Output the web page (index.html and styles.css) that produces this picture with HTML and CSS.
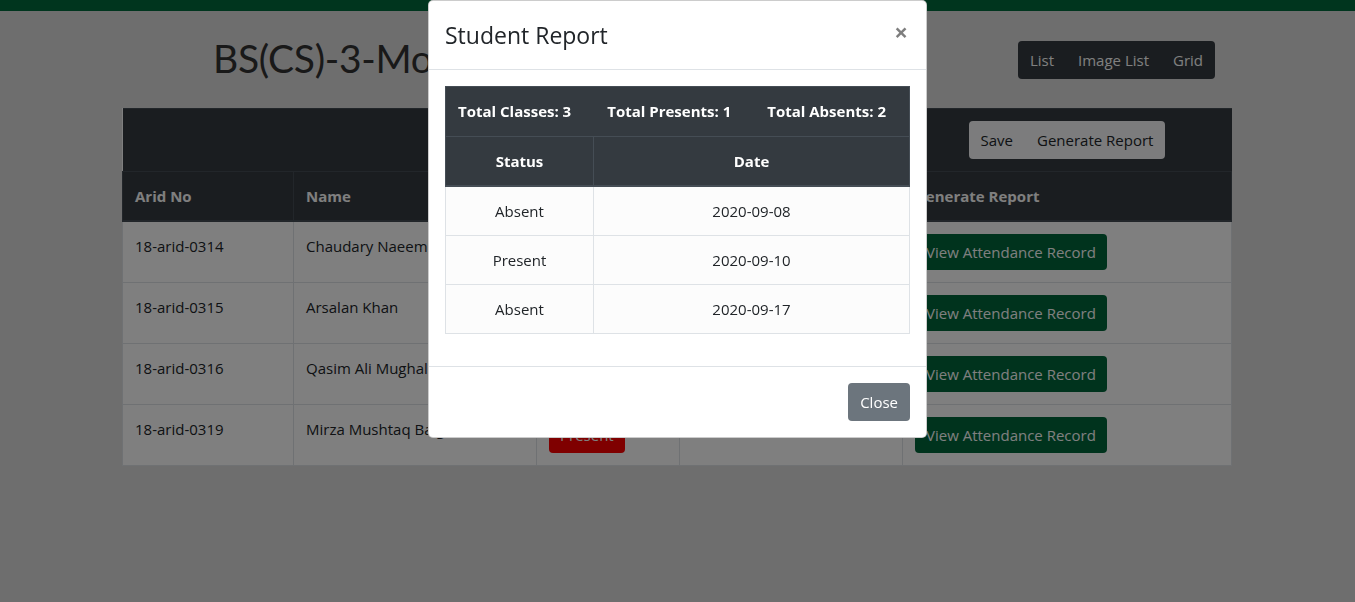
FILE: index.html
```html
<!DOCTYPE html>
<html lang="en">
<head>
<meta charset="utf-8">
<title>Attendance</title>
<link rel="stylesheet" href="styles.css">
</head>
<body>
<div class="topbar"></div>
<div class="container">
  <div class="page-head">
    <h1 class="title">BS(CS)-3-Morning</h1>
    <div class="btn-group">
      <button class="btn btn-dark">List</button><button class="btn btn-dark">Image List</button><button class="btn btn-dark">Grid</button>
    </div>
  </div>
  <table class="main-table">
    <colgroup><col class="c1"><col class="c2"><col class="c3"><col class="c4"><col class="c5"></colgroup>
    <thead>
      <tr class="tool-row">
        <th colspan="4"></th>
        <th class="center"><div class="btn-group"><button class="btn btn-light">Save</button><button class="btn btn-light">Generate Report</button></div></th>
      </tr>
      <tr class="label-row">
        <th>Arid No</th><th>Name</th><th>Attendance</th><th>Remarks</th><th>Generate Report</th>
      </tr>
    </thead>
    <tbody>
      <tr><td>18-arid-0314</td><td>Chaudary Naeem</td><td><button class="btn btn-sm btn-green">Present</button></td><td></td><td><button class="btn btn-sm btn-green">View Attendance Record</button></td></tr>
      <tr><td>18-arid-0315</td><td>Arsalan Khan</td><td><button class="btn btn-sm btn-green">Present</button></td><td></td><td><button class="btn btn-sm btn-green">View Attendance Record</button></td></tr>
      <tr><td>18-arid-0316</td><td>Qasim Ali Mughal</td><td><button class="btn btn-sm btn-green">Present</button></td><td></td><td><button class="btn btn-sm btn-green">View Attendance Record</button></td></tr>
      <tr><td>18-arid-0319</td><td>Mirza Mushtaq Baig</td><td><button class="btn btn-sm btn-red">Present</button></td><td></td><td><button class="btn btn-sm btn-green">View Attendance Record</button></td></tr>
    </tbody>
  </table>
</div>

<div class="backdrop"></div>
<div class="modal">
  <div class="modal-dialog">
    <div class="modal-header">
      <h4 class="modal-title">Student Report</h4>
      <button class="close" aria-label="Close">&times;</button>
    </div>
    <div class="modal-body">
      <table class="report-table">
        <colgroup><col class="r1"><col class="r2"></colgroup>
        <thead>
          <tr class="summary-row">
            <th colspan="2"><div class="summary"><span>Total Classes: 3</span><span>Total Presents: 1</span><span>Total Absents: 2</span></div></th>
          </tr>
          <tr class="head-row"><th>Status</th><th>Date</th></tr>
        </thead>
        <tbody>
          <tr><td>Absent</td><td>2020-09-08</td></tr>
          <tr><td>Present</td><td>2020-09-10</td></tr>
          <tr><td>Absent</td><td>2020-09-17</td></tr>
        </tbody>
      </table>
    </div>
    <div class="modal-footer">
      <button class="btn btn-secondary">Close</button>
    </div>
  </div>
</div>
</body>
</html>
```
FILE: styles.css
```css
* { box-sizing: border-box; }
html, body { margin: 0; }
body {
  background: #dcdcdc;
  font-family: "Open Sans", "Noto Sans", sans-serif;
  font-size: 15px;
  line-height: 24px;
  color: #212529;
  height: 602px;
  overflow: hidden;
}
.topbar { height: 11px; background: #006b3c; }
.container { width: 1111px; margin: 0 auto; }
.page-head {
  display: flex;
  align-items: flex-start;
  justify-content: space-between;
  height: 97px;
  padding: 30px 18px 0 91px;
}
.title {
  margin: -3px 0 0;
  font-family: "Lato", sans-serif;
  font-weight: 400;
  font-size: 39px;
  line-height: 40px;
  color: #333;
  letter-spacing: -0.3px;
}
.btn-group { display: inline-flex; }
.btn {
  font-family: inherit;
  font-size: 15px;
  line-height: 24px;
  padding: 7px 12px;
  border: 0;
  border-radius: 4px;
  cursor: pointer;
}
.btn-group .btn { border-radius: 0; }
.btn-group .btn:first-child { border-radius: 4px 0 0 4px; }
.btn-group .btn:last-child { border-radius: 0 4px 4px 0; }
.btn-dark { background: #343a40; color: #fff; }
.btn-light { background: #f8f9fa; color: #212529; }
.btn-sm { padding: 6px 11px; }
.btn-green { background: #00673a; color: #fff; }
.btn-red { background: #ff0000; color: #fff; }
.btn-secondary { background: #6c757d; color: #fff; }

.main-table {
  width: 1109px;
  table-layout: fixed;
  border-collapse: collapse;
  background: #fff;
}
.c1 { width: 171px; } .c2 { width: 243px; } .c3 { width: 143px; } .c4 { width: 223px; } .c5 { width: 329px; }
.main-table th, .main-table td {
  padding: 12px;
  border: 1px solid #dee2e6;
  text-align: left;
  vertical-align: top;
  white-space: nowrap;
  overflow: hidden;
}
.main-table thead th {
  background: #343a40;
  color: #fff;
  border-color: #454d55;
  font-weight: 700;
}
.main-table .label-row th { border-bottom-width: 2px; }
.main-table .tool-row th.center { text-align: center; }
.main-table .tool-row th { border-left: 0; border-right: 0; }

.backdrop {
  position: fixed;
  inset: 0;
  background: rgba(0, 0, 0, 0.5);
}
.modal {
  position: fixed;
  inset: 0;
  display: flex;
  justify-content: center;
  align-items: flex-start;
}
.modal-dialog {
  width: 499px;
  margin-top: 0;
  background: #fff;
  border: 1px solid rgba(0, 0, 0, 0.2);
  border-radius: 5px;
}
.modal-header {
  display: flex;
  justify-content: space-between;
  align-items: flex-start;
  padding: 16px;
  border-bottom: 1px solid #dee2e6;
}
.modal-title {
  margin: 0;
  font-size: 23px;
  line-height: 36px;
  font-weight: 500;
}
.close {
  background: none;
  border: 0;
  padding: 0;
  margin: -3px 2px 0 0;
  font-size: 24px;
  line-height: 36px;
  font-weight: 700;
  color: #000;
  opacity: 0.5;
  font-family: "Open Sans", sans-serif;
}
.modal-body { padding: 16px; }
.report-table {
  width: 100%;
  table-layout: fixed;
  border-collapse: collapse;
  margin-bottom: 16px;
}
.r1 { width: 148px; }
.report-table th, .report-table td {
  padding: 12px;
  border: 1px solid #dee2e6;
  text-align: center;
  vertical-align: middle;
}
.report-table td { background: #fcfcfc; }
.report-table thead th {
  background: #343a40;
  color: #fff;
  border-color: #454d55;
  font-weight: 700;
}
.report-table .summary-row th { padding: 12px 12px 13px; }
.report-table .head-row th { border-bottom-width: 2px; }
.summary { display: flex; gap: 36px; }
.modal-footer {
  display: flex;
  justify-content: flex-end;
  padding: 16px;
  border-top: 1px solid #dee2e6;
}
```
